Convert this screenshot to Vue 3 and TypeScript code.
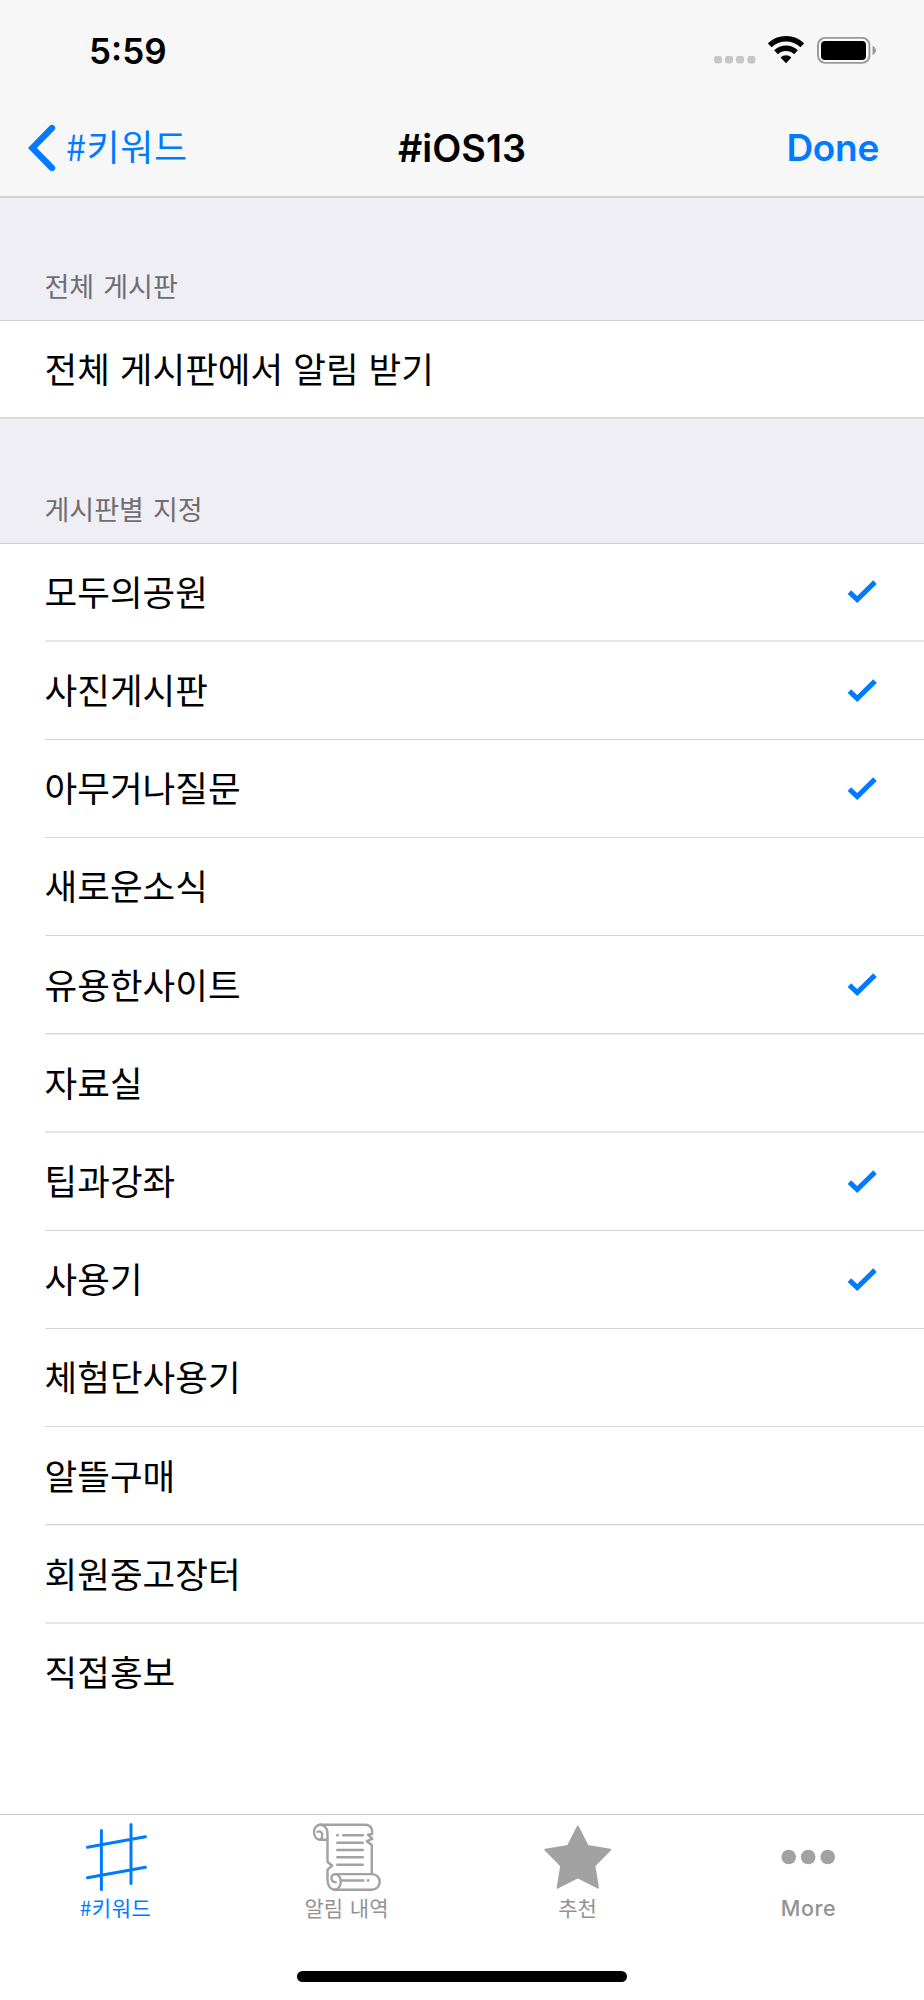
<script setup lang="ts">
interface Board {
  name: string
  checked: boolean
}

const boards: Board[] = [
  { name: '모두의공원', checked: true },
  { name: '사진게시판', checked: true },
  { name: '아무거나질문', checked: true },
  { name: '새로운소식', checked: false },
  { name: '유용한사이트', checked: true },
  { name: '자료실', checked: false },
  { name: '팁과강좌', checked: true },
  { name: '사용기', checked: true },
  { name: '체험단사용기', checked: false },
  { name: '알뜰구매', checked: false },
  { name: '회원중고장터', checked: false },
  { name: '직접홍보', checked: false },
]
</script>

<template>
  <div class="screen">
    <header class="top">
      <div class="status">
        <span class="time">5:59</span>
        <svg class="indicators" width="164" height="30" viewBox="0 0 164 30">
          <g fill="#c6c6c6">
            <rect x="0" y="20" width="8" height="7.4" rx="2.4" />
            <rect x="11" y="20" width="8" height="7.4" rx="2.4" />
            <rect x="22" y="20" width="8" height="7.4" rx="2.4" />
            <rect x="33.4" y="20" width="8" height="7.4" rx="2.4" />
          </g>
          <g fill="none" stroke="#000" stroke-width="5.4">
            <path d="M55.7 9.3A23.5 23.5 0 0 1 88.3 9.3" />
            <path d="M62 16.2A14.5 14.5 0 0 1 82 16.2" />
          </g>
          <path d="M66.6 21.4A8.2 8.2 0 0 1 77.4 21.4L72 27.2Z" fill="#000" />
          <rect x="104" y="1.9" width="51.4" height="25" rx="7.2" fill="#fbfbfb" stroke="#999" stroke-width="1.9" />
          <rect x="107" y="5.1" width="45" height="18.8" rx="4" fill="#000" />
          <path d="M158.5 9.8C163 12 163 16.8 158.5 19Z" fill="#999" />
        </svg>
      </div>
      <nav class="nav">
        <a class="back">
          <svg width="28" height="48" viewBox="0 0 28 48">
            <path d="M24 4.1L4.4 24L24 43.9" fill="none" stroke="#007aff" stroke-width="6.4" stroke-linecap="round" stroke-linejoin="miter" />
          </svg>
          <span>#키워드</span>
        </a>
        <h1>#iOS13</h1>
        <a class="done">Done</a>
      </nav>
    </header>

    <main class="content">
      <h2 class="section first">전체 게시판</h2>
      <div class="single">전체 게시판에서 알림 받기</div>
      <h2 class="section second">게시판별 지정</h2>
      <ul class="list">
        <li v-for="b in boards" :key="b.name">
          <span>{{ b.name }}</span>
          <svg v-if="b.checked" width="30" height="24" viewBox="0 0 30 24">
            <path d="M2.4 12.1L10.2 19.6L28 2.1" fill="none" stroke="#007aff" stroke-width="5" />
          </svg>
        </li>
      </ul>
    </main>

    <footer class="bottom">
      <div class="tabs">
        <a class="tab active">
          <svg width="70" height="70" viewBox="0 0 70 70">
            <g fill="none" stroke="#007aff" stroke-width="3" stroke-linecap="round">
              <path d="M20.4 8.4V67.4M50 2.6V61.4M6.5 25.3L64.4 14.8M6.5 55.7L64.4 45.2" />
            </g>
          </svg>
          <span>#키워드</span>
        </a>
        <a class="tab">
          <svg width="70" height="70" viewBox="0 0 70 70">
            <g transform="translate(-0.9 0.5)">
              <g fill="none" stroke="#a2a2a2" stroke-width="2.4" stroke-linecap="round" stroke-linejoin="round">
                <path d="M8.7 2.2H54C60 2.2 61.7 7 61 11.5L57 12.3L61.2 16.3L55.7 18.7L60.7 22.5V51.2" />
                <path d="M8.7 2.2C13.5 2.2 16.4 6 16.4 11V39.5L21 43L16.4 47.3V56.5C16.4 62.5 19 67.2 24 67.2H60.5C71.3 67.2 71.3 51.6 60.5 51.6H24" />
                <path d="M16.4 17.3H9.3C0.8 17.3 0.8 2.2 9.3 2.2M6.5 9.3C10 7.7 11.7 11 11 14.2C10.8 15.8 9.7 17.3 7.8 17.3" />
                <path d="M24 51.6C31.5 52.5 31.5 66 24 67.2M24 51.6C18.8 51.7 19.2 60.4 24.6 59.6" />
                <path d="M32 12.7H51.7M26.2 20.2H51.7M26.2 27.5H51.7M26.2 34.8H51.7M26.2 42.2H51.7M31 58H52.2" />
              </g>
              <g fill="#a2a2a2"><circle cx="26.4" cy="12.7" r="1.4" /><circle cx="57" cy="58" r="1.4" /></g>
            </g>
          </svg>
          <span>알림 내역</span>
        </a>
        <a class="tab">
          <svg width="70" height="70" viewBox="0 0 70 70">
            <path d="M34.8 4.4L44.7 24L67.4 27.6L51.5 43.8L55.1 65.8L34.8 55.5L14.5 65.8L18.1 43.8L2.2 27.6L24.9 24Z" fill="#a2a2a2" stroke="#a2a2a2" stroke-width="1.8" stroke-linejoin="round" />
          </svg>
          <span>추천</span>
        </a>
        <a class="tab">
          <svg width="70" height="70" viewBox="0 0 70 70">
            <g fill="#a2a2a2"><circle cx="14.7" cy="35" r="7.3" /><circle cx="34.2" cy="35" r="7.3" /><circle cx="53.7" cy="35" r="7.3" /></g>
          </svg>
          <span class="latin">More</span>
        </a>
      </div>
      <div class="home"></div>
    </footer>
  </div>
</template>

<style>
body {
  margin: 0;
}
</style>

<style scoped>
.screen {
  width: 924px;
  height: 2000px;
  display: flex;
  flex-direction: column;
  overflow: hidden;
  background: #fff;
  color: #000;
  font-family: Inter, "Noto Sans CJK KR", sans-serif;
}
.top {
  box-sizing: border-box;
  flex: none;
  height: 198px;
  background: #f7f7f7;
  border-bottom: 2px solid #d3d3d6;
}
.status {
  box-sizing: border-box;
  height: 98px;
  padding: 36px 46px 0 89px;
  display: flex;
  justify-content: space-between;
}
.time {
  font-size: 35px;
  line-height: 31px;
  font-weight: 600;
}
.nav {
  height: 99px;
  display: grid;
  grid-template-columns: 1fr auto 1fr;
  align-items: center;
  padding: 0 45px;
}
.back {
  display: flex;
  align-items: center;
  gap: 10px;
  margin-left: -17px;
  color: #007aff;
  font-family: "Noto Sans CJK KR", sans-serif;
  font-size: 36px;
  line-height: 48px;
}
.back span {
  letter-spacing: 0.6px;
  padding-bottom: 5px;
}
.nav h1 {
  margin: 0;
  font-size: 37.8px;
  line-height: 48px;
  font-weight: 600;
}
.done {
  justify-self: end;
  color: #007aff;
  font-size: 37px;
  line-height: 48px;
  font-weight: 600;
  letter-spacing: -0.3px;
}
.content {
  flex: 1;
  font-family: "Noto Sans CJK KR", sans-serif;
}
.section {
  box-sizing: border-box;
  margin: 0;
  padding-left: 44.5px;
  display: flex;
  align-items: flex-end;
  background: #efeef4;
  border-bottom: 1px solid #cfced3;
  color: #6d6d72;
  font-size: 27px;
  line-height: 40px;
  font-weight: 400;
  word-spacing: 3px;
}
.first {
  height: 123px;
  padding-bottom: 14px;
}
.second {
  height: 127px;
  padding-bottom: 14px;
  border-top: 2px solid #dcdce0;
}
.single {
  height: 96px;
  padding-left: 44.5px;
  font-size: 35.5px;
  line-height: 93px;
  word-spacing: 2.1px;
}
.list {
  list-style: none;
  margin: 0;
  padding: 0 0 0 45px;
}
.list li {
  box-sizing: border-box;
  height: 98px;
  padding-right: 47px;
  display: flex;
  align-items: center;
  justify-content: space-between;
  border-bottom: 1px solid #d6d6d8;
  font-size: 35.5px;
  line-height: 60px;
}
.list li span {
  margin-left: -0.4px;
  padding-bottom: 3px;
}
.list li:nth-child(5n + 1) {
  border-bottom: 2px solid #e6e6e7;
}
.list li:nth-child(5n) {
  height: 99px;
  border-bottom-color: #f0f0f1;
  box-shadow: inset 0 -1px #d8d8da;
}
.list li:last-child {
  border-bottom: 0;
}
.list li:last-child span {
  padding-bottom: 5px;
}
.bottom {
  box-sizing: border-box;
  flex: none;
  height: 186px;
  border-top: 1px solid #c9c9c9;
  display: flex;
  flex-direction: column;
  align-items: center;
  justify-content: space-between;
  padding-bottom: 18px;
}
.tabs {
  width: 100%;
  display: grid;
  grid-template-columns: repeat(4, 1fr);
  padding-top: 7px;
}
.tab {
  display: flex;
  flex-direction: column;
  align-items: center;
  color: #929292;
  font-family: "Noto Sans CJK KR", sans-serif;
  font-size: 21px;
  line-height: 30px;
  word-spacing: 2px;
}
.tab.active {
  color: #007aff;
  letter-spacing: 0.5px;
}
.tab .latin {
  padding-top: 1px;
  font-family: Inter, sans-serif;
  font-size: 21.5px;
  font-weight: 450;
  letter-spacing: 0.6px;
}
.home {
  width: 330px;
  height: 11px;
  border-radius: 6px;
  background: #000;
}
</style>
